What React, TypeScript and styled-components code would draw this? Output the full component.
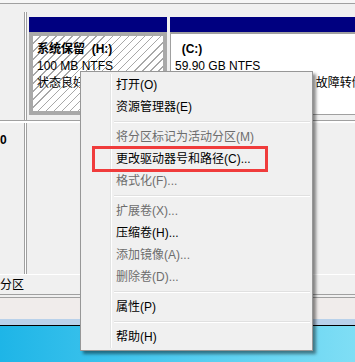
import React from "react";
import styled, { createGlobalStyle } from "styled-components";

const GlobalStyle = createGlobalStyle`
  html, body {
    margin: 0;
    padding: 0;
    background: #f0f0f0;
  }
  body {
    font-family: "Liberation Sans", "Noto Sans CJK SC", sans-serif;
    font-size: 12px;
  }
`;

type MenuEntry =
  | { kind: "item"; label: string; disabled?: boolean; highlight?: boolean }
  | { kind: "sep" };

const menu: MenuEntry[] = [
  { kind: "item", label: "打开(O)" },
  { kind: "item", label: "资源管理器(E)" },
  { kind: "sep" },
  { kind: "item", label: "将分区标记为活动分区(M)", disabled: true },
  { kind: "item", label: "更改驱动器号和路径(C)...", highlight: true },
  { kind: "item", label: "格式化(F)...", disabled: true },
  { kind: "sep" },
  { kind: "item", label: "扩展卷(X)...", disabled: true },
  { kind: "item", label: "压缩卷(H)..." },
  { kind: "item", label: "添加镜像(A)...", disabled: true },
  { kind: "item", label: "删除卷(D)...", disabled: true },
  { kind: "sep" },
  { kind: "item", label: "属性(P)" },
  { kind: "sep" },
  { kind: "item", label: "帮助(H)" },
];

function App() {
  return (
    <>
      <GlobalStyle />
      <Page>
        <TopStrip />
        <DiskArea>
          <DiskRow>
            <LabelCell />
            <Partitions>
              <Partition width={138}>
                <PartHeader />
                <PartBody selected>
                  <Bold>系统保留&nbsp;&nbsp;(H:)</Bold>
                  <Line>100 MB NTFS</Line>
                  <Line>状态良好 (主分区)</Line>
                </PartBody>
              </Partition>
              <Partition grow>
                <PartHeader />
                <PartBody>
                  <Bold>&nbsp;&nbsp;(C:)</Bold>
                  <Line>59.90 GB NTFS</Line>
                  <Line>状态良好 (启动, 页面文件, 故障转储, 主分区)</Line>
                </PartBody>
              </Partition>
            </Partitions>
          </DiskRow>
          <DiskRow second>
            <LabelCell>
              <DiskName>0</DiskName>
            </LabelCell>
            <Partitions />
          </DiskRow>
          <Legend>分区</Legend>
        </DiskArea>
        <StatusArea />
        <TaskStrip />
        <Desktop />

        <Menu>
          <Gutter />
          {menu.map((m, i) =>
            m.kind === "sep" ? (
              <Separator key={i} />
            ) : (
              <MenuItem key={i} disabled={m.disabled}>
                {m.label}
                {m.highlight && <Highlight />}
              </MenuItem>
            )
          )}
        </Menu>
      </Page>
    </>
  );
}

export default App;

const Page = styled.div`
  position: relative;
  width: 355px;
  height: 362px;
  overflow: hidden;
  display: flex;
  flex-direction: column;
  background: #f0f0f0;
`;

const TopStrip = styled.div`
  height: 3px;
  background: #f6f6f6;
  border-bottom: 1px solid #a0a0a0;
  flex-shrink: 0;
`;

const DiskArea = styled.div`
  display: flex;
  flex-direction: column;
  padding-top: 8px;
  border-bottom: 1px solid #a0a0a0;
  flex-shrink: 0;
`;

const DiskRow = styled.div<{ second?: boolean }>`
  display: flex;
  height: ${(p) => (p.second ? 151 : 108)}px;
  border-bottom: 1px solid ${(p) => (p.second ? "#ffffff" : "#a0a0a0")};
  border-top: ${(p) => (p.second ? "2px solid #ffffff" : "none")};
`;

const LabelCell = styled.div`
  width: 24px;
  flex-shrink: 0;
  border-right: 1px solid #a0a0a0;
  box-shadow: 1px 0 0 #ffffff;
  position: relative;
`;

const DiskName = styled.div`
  margin-top: 10px;
  font-weight: bold;
  font-size: 12px;
  line-height: 14px;
  color: #000;
`;

const Partitions = styled.div`
  flex: 1;
  display: flex;
  gap: 3px;
  padding: 5px 0 5px 2px;
  margin-left: 1px;
  border-left: 1px solid #a0a0a0;
`;

const Partition = styled.div<{ width?: number; grow?: boolean }>`
  display: flex;
  flex-direction: column;
  width: ${(p) => (p.width ? `${p.width}px` : "auto")};
  flex: ${(p) => (p.grow ? 1 : "none")};
  min-width: 0;
`;

const PartHeader = styled.div`
  height: 15px;
  background: #000080;
`;

const PartBody = styled.div<{ selected?: boolean }>`
  flex: 1;
  overflow: hidden;
  padding: ${(p) => (p.selected ? "5px 4px" : "7px 4px")};
  border: ${(p) => (p.selected ? "4px solid #a9a9a9" : "1px solid #a0a0a0")};
  border-top-width: ${(p) => (p.selected ? "4px" : "2px")};
  background: ${(p) =>
    p.selected
      ? "repeating-linear-gradient(135deg, #ffffff 0px, #ffffff 4.6px, #a8a8a8 4.6px, #a8a8a8 5.7px)"
      : "#ffffff"};
  white-space: nowrap;
  color: #000;
  font-size: 12px;
  line-height: 17px;
`;

const Bold = styled.div`
  font-weight: bold;
`;

const Line = styled.div``;

const Legend = styled.div`
  height: 18px;
  line-height: 18px;
  font-size: 12px;
  color: #000;
  padding-top: 1px;
`;

const StatusArea = styled.div`
  height: 21px;
  border-top: 1px solid #a0a0a0;
  margin-top: 2px;
  background: #f0eceb;
  flex-shrink: 0;
`;

const TaskStrip = styled.div`
  height: 6px;
  background: #b9d1ea;
  border-bottom: 1px solid #000;
  flex-shrink: 0;
`;

const Desktop = styled.div`
  flex: 1;
  background: linear-gradient(90deg, #1eb5e7 0%, #4fcbef 50%, #7fdef5 100%);
`;

const Menu = styled.div`
  position: absolute;
  left: 80px;
  top: 71px;
  width: 227px;
  padding: 2px;
  background: #f0f0f0;
  border: 1px solid #979797;
  box-shadow: 3px 3px 3px rgba(0, 0, 0, 0.45);
  display: flex;
  flex-direction: column;
`;

const Gutter = styled.div`
  position: absolute;
  left: 29px;
  top: 2px;
  bottom: 2px;
  width: 1px;
  background: #e2e3e3;
  box-shadow: 1px 0 0 #ffffff;
`;

const MenuItem = styled.div<{ disabled?: boolean }>`
  position: relative;
  height: 22px;
  line-height: 22px;
  padding-left: 33px;
  font-size: 12px;
  color: ${(p) => (p.disabled ? "#6d6d6d" : "#000000")};
  white-space: nowrap;
`;

const Separator = styled.div`
  height: 8px;
  margin-left: 31px;
  position: relative;
  &::after {
    content: "";
    position: absolute;
    left: 0;
    right: 0;
    top: 3px;
    height: 1px;
    background: #e0e0e0;
    border-bottom: 1px solid #ffffff;
  }
`;

const Highlight = styled.div`
  position: absolute;
  left: 9px;
  top: -2px;
  width: 170px;
  height: 20px;
  border: 3px solid #f03c3c;
`;
